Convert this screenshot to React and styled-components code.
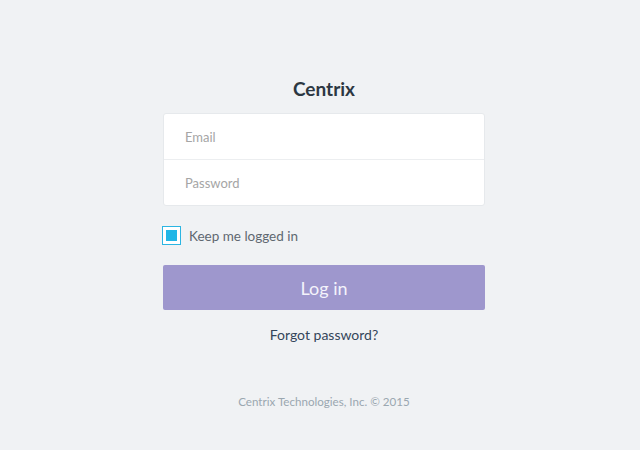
import React from "react";
import styled, { createGlobalStyle } from "styled-components";

const GlobalStyle = createGlobalStyle`
  html, body {
    margin: 0;
    padding: 0;
    background: #f0f2f4;
  }
  body {
    font-family: "Lato", "Open Sans", sans-serif;
  }
`;

const Page = styled.div`
  width: 640px;
  height: 450px;
  display: flex;
  flex-direction: column;
  align-items: center;
  padding: 77px 0 0 8px;
  box-sizing: border-box;
`;

const Title = styled.h1`
  margin: 0 0 12px;
  font-size: 19px;
  font-weight: 700;
  color: #2c3742;
  line-height: 24px;
`;

const Form = styled.form`
  width: 322px;
  display: flex;
  flex-direction: column;
`;

const Card = styled.div`
  background: #fff;
  border: 1px solid #e6e9ec;
  border-radius: 3px;
  display: flex;
  flex-direction: column;
`;

const Field = styled.input`
  height: 45px;
  border: 0;
  border-top: ${(p) => (p.first ? "0" : "1px solid #eceef0")};
  background: transparent;
  padding: 0 21px;
  font-family: inherit;
  font-size: 13px;
  color: #555;
  outline: none;
  &::placeholder {
    color: #a5a5a5;
  }
`;

const CheckRow = styled.label`
  display: flex;
  align-items: center;
  gap: 8px;
  margin-top: 20px;
  font-size: 13.5px;
  color: #5f6870;
`;

const Box = styled.span`
  width: 19px;
  height: 19px;
  border: 1px solid #2bb5e2;
  background: #fff;
  display: flex;
  align-items: center;
  justify-content: center;
  box-sizing: border-box;
  margin-left: -1px;
  &::after {
    content: "";
    width: 11px;
    height: 11px;
    background: #21b6e6;
  }
`;

const Button = styled.button`
  margin-top: 20px;
  height: 45px;
  border: 0;
  border-radius: 2px;
  background: #9e97cd;
  color: #f4f3fb;
  font-family: inherit;
  font-size: 18px;
  cursor: pointer;
`;

const Forgot = styled.a`
  margin-top: 16px;
  text-align: center;
  font-size: 14px;
  color: #34465a;
  text-decoration: none;
`;

const Footer = styled.div`
  margin-top: 52px;
  font-size: 11.6px;
  color: #9aa7b0;
`;

export default function App() {
  return (
    <>
      <GlobalStyle />
      <Page>
        <Title>Centrix</Title>
        <Form onSubmit={(e) => e.preventDefault()}>
          <Card>
            <Field first type="email" placeholder="Email" />
            <Field type="password" placeholder="Password" />
          </Card>
          <CheckRow>
            <Box />
            Keep me logged in
          </CheckRow>
          <Button type="submit">Log in</Button>
          <Forgot href="#">Forgot password?</Forgot>
        </Form>
        <Footer>Centrix Technologies, Inc. © 2015</Footer>
      </Page>
    </>
  );
}
